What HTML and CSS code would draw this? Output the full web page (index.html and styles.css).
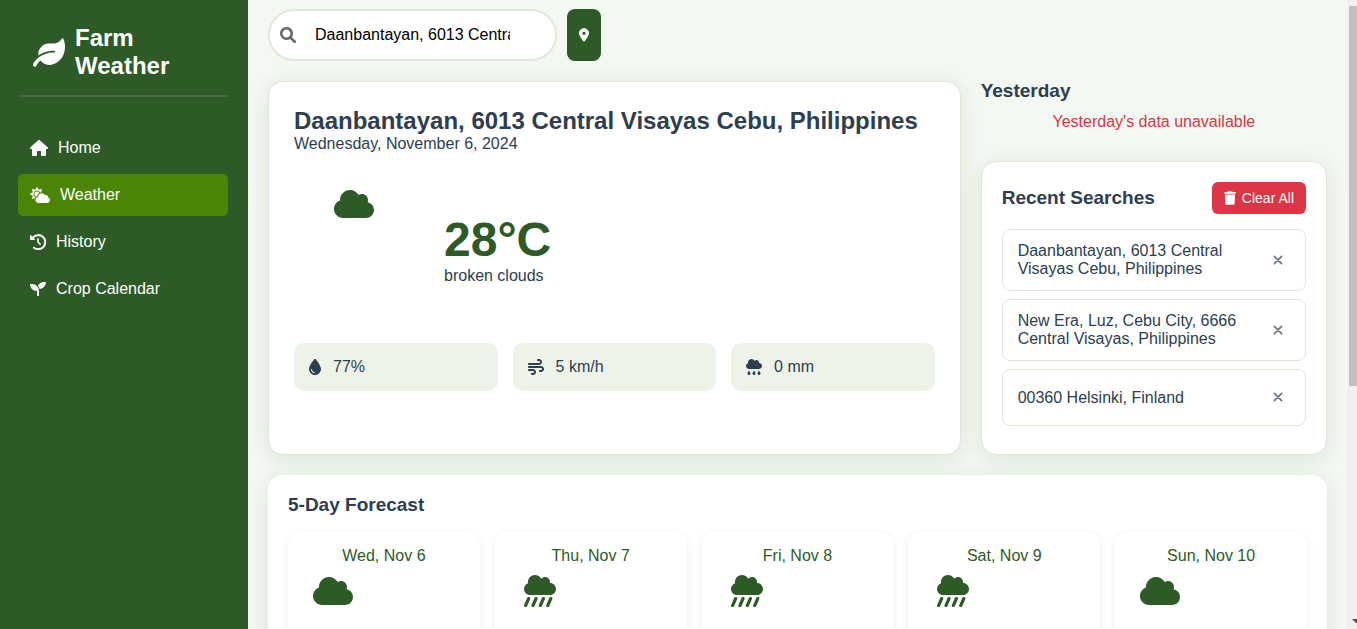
FILE: index.html
```html
<!DOCTYPE html>
<html lang="en">
<head>
<meta charset="utf-8">
<meta name="viewport" content="width=device-width, initial-scale=1">
<title>Farm Weather</title>
<link rel="stylesheet" href="styles.css">
</head>
<body>
<svg class="sprite" aria-hidden="true">
  <symbol id="cloud" viewBox="0 0 640 512"><path d="M537.6 226.6c4.1-10.7 6.4-22.4 6.4-34.6 0-53-43-96-96-96-19.7 0-38.1 6-53.3 16.2C367 64.2 315.3 32 256 32c-88.4 0-160 71.6-160 160 0 2.7.1 5.4.2 8.1C40.2 219.8 0 273.2 0 336c0 79.5 64.5 144 144 144h368c70.7 0 128-57.3 128-128 0-61.9-44-113.6-102.4-125.4z"/></symbol>
  <symbol id="showers" viewBox="0 0 512 512"><path d="M416 128c-.6 0-1.1.2-1.6.2 1.1-5.2 1.6-10.6 1.6-16.2 0-44.2-35.8-80-80-80-24.6 0-46.3 11.3-61 28.8C256.4 24.8 219.3 0 176 0 114.1 0 64 50.1 64 112c0 7.3.8 14.3 2.1 21.2C27.8 145.8 0 181.5 0 224c0 53 43 96 96 96h320c53 0 96-43 96-96s-43-96-96-96z"/><path d="M75 376L26 488M193 376L144 488M311 376L262 488M429 376L380 488" fill="none" stroke="currentColor" stroke-width="50" stroke-linecap="round"/></symbol>
  <symbol id="rain" viewBox="0 0 512 512"><path d="M416 128c-.6 0-1.1.2-1.6.2 1.1-5.2 1.6-10.6 1.6-16.2 0-44.2-35.8-80-80-80-24.6 0-46.3 11.3-61 28.8C256.4 24.8 219.3 0 176 0 114.1 0 64 50.1 64 112c0 7.3.8 14.3 2.1 21.2C27.8 145.8 0 181.5 0 224c0 53 43 96 96 96h320c53 0 96-43 96-96s-43-96-96-96zM88 374.2c-12.8 44.4-40 56.4-40 87.7 0 27.7 21.5 50.1 48 50.1s48-22.4 48-50.1c0-31.4-27.2-43.1-40-87.7-2.2-8.1-13.5-8.5-16 0zm160 0c-12.8 44.4-40 56.4-40 87.7 0 27.7 21.5 50.1 48 50.1s48-22.4 48-50.1c0-31.4-27.2-43.1-40-87.7-2.2-8.1-13.5-8.5-16 0zm160 0c-12.8 44.4-40 56.4-40 87.7 0 27.7 21.5 50.1 48 50.1s48-22.4 48-50.1c0-31.4-27.2-43.1-40-87.7-2.2-8.1-13.5-8.5-16 0z"/></symbol>
  <symbol id="xmark" viewBox="0 0 10 10"><path d="M1.400 1.400L8.600 8.600M8.600 1.400L1.400 8.600" fill="none" stroke="currentColor" stroke-width="1.700" stroke-linecap="round"/></symbol>
</svg>
<div class="app">
  <aside class="sidebar">
    <div class="logo">
      <svg class="logo-icon" viewBox="0 0 576 512" aria-hidden="true"><path d="M546.2 9.7c-5.6-12.5-21.6-13-28.3-1.2C486.9 62.4 431.4 96 368 96h-80C182 96 96 182 96 288c0 7 .8 13.7 1.5 20.5C161.3 262.8 253.4 224 384 224c8.8 0 16 7.2 16 16s-7.2 16-16 16C132.6 256 26 410.1 2.4 468c-6.6 16.3 1.2 34.9 17.5 41.6 16.4 6.8 35-1.1 41.8-17.3 1.5-3.6 20.9-47.9 71.9-90.6 32.4 43.9 94 85.8 174.9 77.2C465.5 467.5 576 326.7 576 154.3c0-50.2-10.8-102.2-29.8-144.6z"/></svg>
      <span>Farm Weather</span>
    </div>
    <nav class="nav">
      <a class="nav-link" href="#"><svg class="icon-18" viewBox="0 0 576 512" aria-hidden="true"><path d="M575.8 255.5c0 18-15 32.1-32 32.1h-32l.7 160.2c0 2.7-.2 5.4-.5 8.1V472c0 22.1-17.9 40-40 40H456c-1.1 0-2.2 0-3.3-.1c-1.4 .1-2.8 .1-4.2 .1H416 392c-22.1 0-40-17.9-40-40V448 384c0-17.7-14.3-32-32-32H256c-17.7 0-32 14.3-32 32v64 24c0 22.1-17.9 40-40 40H160 128.1c-1.5 0-3-.1-4.5-.2c-1.2 .1-2.4 .2-3.6 .2H104c-22.1 0-40-17.9-40-40V360c0-.9 0-1.9 .1-2.8V287.6H32c-18 0-32-14-32-32.1c0-9 3-17 10-24L266.4 8c7-7 15-8 22-8s15 2 21 7L564.8 231.5c8 7 12 15 11 24z"/></svg>Home</a>
      <a class="nav-link active" href="#"><svg class="icon-20" viewBox="0 0 640 512" aria-hidden="true"><path d="M575.2 325.7c.2-1.9.8-3.7.8-5.6 0-35.3-28.7-64-64-64-12.6 0-24.2 3.8-34.1 10-17.6-38.8-56.5-66-101.9-66-61.8 0-112 50.1-112 112 0 3 .7 5.8.9 8.7-49.6 3.7-88.9 44.7-88.9 95.3 0 53 43 96 96 96h272c53 0 96-43 96-96 0-42.1-27.2-77.4-64.8-90.4zm-430.4-22.6c-43.7-43.7-43.7-114.7 0-158.3 43.7-43.7 114.7-43.7 158.4 0 9.7 9.7 16.9 20.9 22.3 32.7 9.8-3.7 20.1-6 30.7-7.5L386 81.1c4-11.9-7.3-23.1-19.2-19.2L279 91.2 237.5 8.4C232-2.8 216-2.8 210.4 8.4L169 91.2 81.1 61.9C69.3 58 58 69.3 61.9 81.1l29.3 87.8-82.8 41.5c-11.2 5.6-11.2 21.5 0 27.1l82.8 41.4-29.3 87.8c-4 11.9 7.3 23.1 19.2 19.2l76.1-25.3c6.1-12.4 14-23.7 23.6-33.5-13-5.4-25.4-13.4-36-24zm-4.8-79.2c0 40.8 29.3 74.8 67.9 82.3 8-4.7 16.3-8.8 25.2-11.7 5.4-44.3 31-82.5 67.4-105C287.3 160.4 258 140 224 140c-46.3 0-84 37.6-84 83.9z"/></svg>Weather</a>
      <a class="nav-link" href="#"><svg class="icon-16" viewBox="0 0 512 512" aria-hidden="true"><path d="M0 48c0-15 16-22 27-12L158 164c11 11 3 28-12 28H24c-13 0-24-11-24-24z"/><path d="M96 112A224 224 0 1 1 128 439" fill="none" stroke="currentColor" stroke-width="66" stroke-linecap="round"/><path d="M256 152V256L322 324" fill="none" stroke="currentColor" stroke-width="50" stroke-linecap="round" stroke-linejoin="round"/></svg>History</a>
      <a class="nav-link" href="#"><svg class="icon-16" viewBox="0 0 512 512" aria-hidden="true"><path d="M64 96H16C7 96 0 103 0 112c4 116 103 208 224 208v128c0 17.700 14.300 32 32 32s32-14.300 32-32V320C288 196.300 187.700 96 64 96zm384-64c-84.200 0-157.400 46.500-195.700 115.200 27.700 30.200 48.200 66.900 59 107.600C419 244 504 156 512 48c0-9-7-16-16-16h-48z"/></svg>Crop Calendar</a>
    </nav>
  </aside>

  <main class="main">
    <form class="search-row">
      <div class="search-box">
        <svg class="icon-16 search-icon" viewBox="0 0 512 512" aria-hidden="true"><path d="M500.300 443.700l-119.700-119.700c27.220-40.410 40.650-90.900 33.460-144.700C401.800 87.790 326.800 13.320 235.200 1.723C99.010-15.510-15.510 99.010 1.724 235.200c11.600 91.640 86.080 166.700 177.600 178.900c53.800 7.189 104.300-6.236 144.700-33.460l119.700 119.700c15.620 15.620 40.950 15.620 56.570 0C515.900 484.700 515.900 459.300 500.300 443.700zM79.100 208c0-70.580 57.420-128 128-128s128 57.420 128 128c0 70.580-57.420 128-128 128S79.100 278.600 79.100 208z"/></svg>
        <input class="search-input" type="text" aria-label="Search location" value="Daanbantayan, 6013 Central Visayas Cebu, Philippines">
      </div>
      <button class="locate" type="button" aria-label="Use my location"><svg class="pin" viewBox="0 0 384 512" aria-hidden="true"><path d="M215.7 499.2C267 435 384 279.4 384 192C384 86 298 0 192 0S0 86 0 192c0 87.4 117 243 168.300 307.200c12.300 15.300 35.100 15.300 47.400 0zM192 128a64 64 0 1 1 0 128 64 64 0 1 1 0-128z"/></svg></button>
    </form>

    <div class="overview">
      <section class="card current">
        <h1 class="place">Daanbantayan, 6013 Central Visayas Cebu, Philippines</h1>
        <p>Wednesday, November 6, 2024</p>
        <div class="conditions">
          <div class="condition-icon"><svg class="icon-40" aria-hidden="true"><use href="#cloud"/></svg></div>
          <div>
            <div class="temp">28°C</div>
            <p>broken clouds</p>
          </div>
        </div>
        <div class="stats">
          <div class="stat"><svg class="icon-12" viewBox="0 0 384 512" aria-hidden="true"><path d="M192 512C86 512 0 426 0 320C0 228.800 130.200 57.700 166.600 11.700C172.600 4.200 181.500 0 191.100 0h1.800c9.600 0 18.500 4.200 24.500 11.700C253.800 57.700 384 228.800 384 320c0 106-86 192-192 192zM96 336c0-8.800-7.200-16-16-16s-16 7.200-16 16c0 61.900 50.100 112 112 112c8.800 0 16-7.200 16-16s-7.200-16-16-16c-44.200 0-80-35.800-80-80z"/></svg>77%</div>
          <div class="stat"><svg class="icon-16" viewBox="0 0 512 512" aria-hidden="true"><path d="M288 32c0 17.700 14.300 32 32 32h32c17.700 0 32 14.300 32 32s-14.300 32-32 32H32c-17.700 0-32 14.300-32 32s14.300 32 32 32H352c53 0 96-43 96-96s-43-96-96-96H320c-17.700 0-32 14.300-32 32zm64 352c0 17.700 14.300 32 32 32h32c53 0 96-43 96-96s-43-96-96-96H32c-17.700 0-32 14.300-32 32s14.300 32 32 32H416c17.700 0 32 14.300 32 32s-14.300 32-32 32H384c-17.700 0-32 14.300-32 32zM128 512h32c53 0 96-43 96-96s-43-96-96-96H32c-17.700 0-32 14.300-32 32s14.300 32 32 32H160c17.700 0 32 14.300 32 32s-14.300 32-32 32H128c-17.700 0-32 14.300-32 32s14.300 32 32 32z"/></svg>5 km/h</div>
          <div class="stat"><svg class="icon-16" aria-hidden="true"><use href="#rain"/></svg>0 mm</div>
        </div>
      </section>

      <div class="side">
        <section class="yesterday">
          <h2 class="title">Yesterday</h2>
          <p class="error">Yesterday's data unavailable</p>
        </section>
        <section class="card recent">
          <div class="recent-head">
            <h2 class="title">Recent Searches</h2>
            <button class="clear" type="button"><svg class="trash" viewBox="0 0 448 512" aria-hidden="true"><path d="M135.200 17.700L128 32H32C14.300 32 0 46.300 0 64S14.300 96 32 96H416c17.700 0 32-14.300 32-32s-14.300-32-32-32H320l-7.200-14.300C307.400 6.800 296.300 0 284.200 0H163.800c-12.100 0-23.200 6.800-28.600 17.700zM416 128H32L53.200 467c1.600 25.300 22.600 45 47.900 45H346.900c25.300 0 46.300-19.700 47.900-45L416 128z"/></svg>Clear All</button>
          </div>
          <ul class="recent-list">
            <li class="recent-item"><span>Daanbantayan, 6013 Central Visayas Cebu, Philippines</span><button class="remove" type="button" aria-label="Remove"><svg class="icon-10" aria-hidden="true"><use href="#xmark"/></svg></button></li>
            <li class="recent-item"><span>New Era, Luz, Cebu City, 6666 Central Visayas, Philippines</span><button class="remove" type="button" aria-label="Remove"><svg class="icon-10" aria-hidden="true"><use href="#xmark"/></svg></button></li>
            <li class="recent-item"><span>00360 Helsinki, Finland</span><button class="remove" type="button" aria-label="Remove"><svg class="icon-10" aria-hidden="true"><use href="#xmark"/></svg></button></li>
          </ul>
        </section>
      </div>
    </div>

    <section class="forecast">
      <h2 class="title">5-Day Forecast</h2>
      <div class="days">
        <article class="day"><p class="date">Wed, Nov 6</p><div class="day-icon"><svg class="icon-40" aria-hidden="true"><use href="#cloud"/></svg></div></article>
        <article class="day"><p class="date">Thu, Nov 7</p><div class="day-icon"><svg class="icon-32" aria-hidden="true"><use href="#showers"/></svg></div></article>
        <article class="day"><p class="date">Fri, Nov 8</p><div class="day-icon"><svg class="icon-32" aria-hidden="true"><use href="#showers"/></svg></div></article>
        <article class="day"><p class="date">Sat, Nov 9</p><div class="day-icon"><svg class="icon-32" aria-hidden="true"><use href="#showers"/></svg></div></article>
        <article class="day"><p class="date">Sun, Nov 10</p><div class="day-icon"><svg class="icon-40" aria-hidden="true"><use href="#cloud"/></svg></div></article>
      </div>
    </section>
  </main>

  <div class="scrollbar" aria-hidden="true">
    <div class="thumb"></div>
    <svg class="arrow" viewBox="0 0 5 4"><path d="M0 0H5V4H4z"/></svg>
  </div>
</div>
</body>
</html>
```
FILE: styles.css
```css
:root {
  --green: #2d5a27;
  --ink: #2c3e50;
  --line: #e0e5d5;
  --red: #dc3545;
}

* {
  box-sizing: border-box;
  margin: 0;
  padding: 0;
}

body {
  font-family: "Liberation Sans", Arial, sans-serif;
  font-size: 16px;
  line-height: 18px;
  color: var(--ink);
  background: #f3f8f2;
}

button,
input {
  font: inherit;
  border: 0;
}

svg {
  display: block;
  flex: none;
  fill: currentColor;
}

.sprite { position: absolute; width: 0; height: 0; }
.icon-10 { width: 10px; height: 10px; }
.icon-12 { width: 12px; height: 16px; }
.icon-16 { width: 16px; height: 16px; }
.icon-18 { width: 18px; height: 16px; }
.icon-20 { width: 20px; height: 16px; }
.icon-32 { width: 32px; height: 32px; }
.icon-40 { width: 40px; height: 32px; }

.app {
  display: grid;
  grid-template-columns: 248px minmax(0, 1fr) 10px;
  height: 100vh;
  overflow: hidden;
}

/* Sidebar */
.sidebar {
  padding: 24px 20px 20px 18px;
  background: var(--green);
  color: #fff;
}

.logo {
  display: flex;
  align-items: center;
  gap: 10px;
  padding: 0 15px 15px;
  border-bottom: 2px solid rgba(255, 255, 255, 0.1);
  font-size: 24px;
  line-height: 28px;
  font-weight: bold;
}

.logo-icon { width: 32px; height: 29px; }

.nav {
  display: flex;
  flex-direction: column;
  gap: 5px;
  margin-top: 30px;
}

.nav-link {
  display: flex;
  align-items: center;
  gap: 10px;
  padding: 12px;
  border-radius: 5px;
  color: #fff;
  text-decoration: none;
}

.nav-link.active { background: #4a8505; }

/* Main column */
.main {
  min-width: 0;
  padding: 9px 20px 20px;
  overflow: hidden;
}

.search-row {
  display: flex;
  gap: 10px;
  margin-bottom: 20px;
}

.search-box {
  display: flex;
  align-items: center;
  width: 289px;
  height: 52px;
  padding: 0 45px 0 10px;
  border: 2px solid #e0e8d8;
  border-radius: 26px;
  background: #fff;
}

.search-icon { color: #666; }

.search-input {
  flex: 1;
  min-width: 0;
  margin-left: 19px;
  color: #000;
  background: none;
  outline: none;
}

.locate {
  padding: 0 12px;
  border-radius: 8px;
  background: var(--green);
  color: #fff;
}

.pin { width: 10px; height: 14px; }

.overview {
  display: grid;
  grid-template-columns: minmax(0, 2fr) minmax(0, 1fr);
  gap: 20px;
  margin-bottom: 20px;
}

.card {
  border: 1px solid var(--line);
  border-radius: 15px;
  background: #fff;
  box-shadow: 0 4px 20px rgba(45, 90, 39, 0.12);
}

.current { padding: 25px; }

.place {
  font-size: 24px;
  line-height: 28px;
}

.conditions {
  display: flex;
  align-items: center;
  gap: 30px;
  margin: 35px 0;
}

.condition-icon {
  display: flex;
  justify-content: center;
  width: 120px;
  height: 120px;
  color: var(--green);
}

.temp {
  font-size: 48px;
  line-height: 55px;
  font-weight: bold;
  color: var(--green);
}

.stats {
  display: grid;
  grid-template-columns: repeat(3, 1fr);
  gap: 15px;
}

.stat {
  display: flex;
  align-items: center;
  gap: 12px;
  padding: 15px;
  border-radius: 10px;
  background: #edf3e8;
}

/* Right column */
.title {
  font-size: 19px;
  line-height: 20px;
}

.yesterday { margin-bottom: 30px; }

.error {
  margin-top: 12px;
  text-align: center;
  color: var(--red);
}

.recent { padding: 20px; }

.recent-head {
  display: flex;
  justify-content: space-between;
  margin-bottom: 15px;
}

.recent-head .title { padding-top: 6px; }

.clear {
  display: flex;
  align-items: center;
  gap: 6px;
  padding: 7px 12px;
  border-radius: 6px;
  background: var(--red);
  color: #fff;
  font-size: 14px;
}

.trash { width: 12px; height: 14px; }

.recent-list { list-style: none; }

.recent-item {
  display: flex;
  align-items: center;
  justify-content: space-between;
  gap: 10px;
  margin-bottom: 8px;
  padding: 12px 15px;
  border: 1px solid var(--line);
  border-radius: 8px;
}

.remove {
  padding: 10px 7px 11px;
  background: none;
  color: #6c757d;
}

/* Forecast */
.forecast {
  padding: 20px;
  border-radius: 15px;
  background: #fff;
  box-shadow: 0 4px 20px rgba(45, 90, 39, 0.12);
}

.days {
  display: grid;
  grid-template-columns: repeat(5, 1fr);
  gap: 15px;
  margin-top: 17px;
}

.day {
  min-height: 160px;
  padding: 15px;
  border-radius: 12px;
  background: #fff;
  color: var(--green);
  box-shadow: 0 2px 10px rgba(0, 0, 0, 0.07);
}

.date { text-align: center; }

.day-icon {
  display: flex;
  justify-content: center;
  width: 60px;
  height: 60px;
  margin-top: 10px;
}

/* Scroll track */
.scrollbar {
  display: flex;
  flex-direction: column;
  justify-content: space-between;
  padding: 6px 0 6px 2px;
  background: #f0f0f0;
}

.thumb {
  height: 380px;
  background: #c1c1c1;
}

.arrow {
  align-self: flex-end;
  width: 5px;
  height: 4px;
  color: #505050;
}
```
